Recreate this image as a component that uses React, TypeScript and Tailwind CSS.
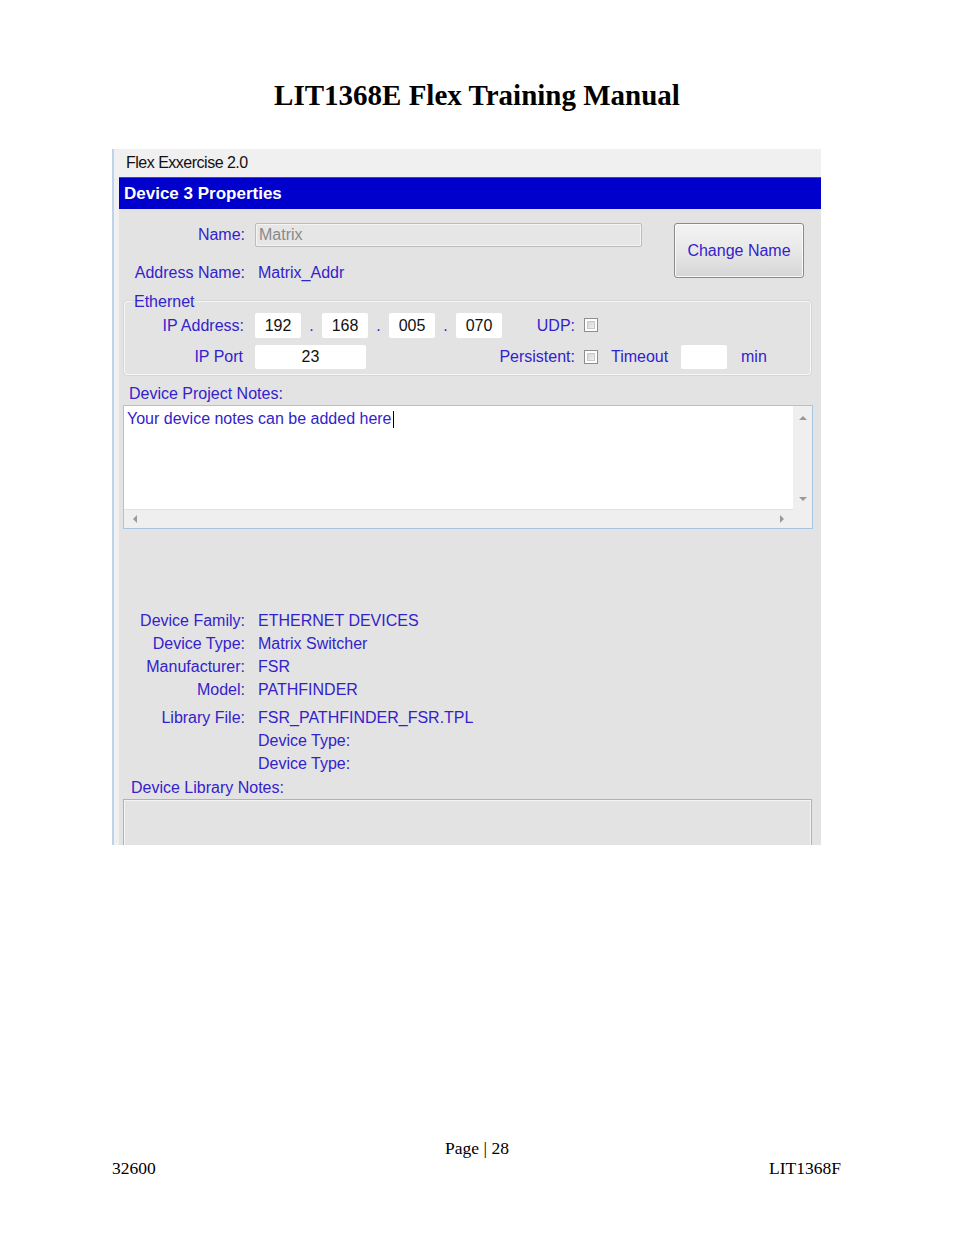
import React from "react";

const LBL = "text-[#3322cc]";

function Checkbox() {
  return (
    <div className="w-[14px] h-[14px] border border-[#8e8e8e] bg-white p-[2px]">
      <div className="w-full h-full bg-gradient-to-br from-[#d4d4d4] to-[#f0f0f0] border border-[#c8c8c8]" />
    </div>
  );
}

function IpBox({ v }: { v: string }) {
  return (
    <div className="w-[46px] h-[25px] bg-white rounded-[2px] flex items-center justify-center text-[#111]">
      {v}
    </div>
  );
}

function Dot() {
  return <div className={`w-[21px] text-center ${LBL}`}>.</div>;
}

function Tri({ dir }: { dir: "up" | "down" | "left" | "right" }) {
  const pts =
    dir === "up"
      ? "0,5 4,1 8,5"
      : dir === "down"
      ? "0,1 8,1 4,5"
      : dir === "left"
      ? "5,0 5,8 1,4"
      : "1,0 1,8 5,4";
  const w = dir === "up" || dir === "down" ? 8 : 6;
  const h = dir === "up" || dir === "down" ? 6 : 8;
  return (
    <svg width={w} height={h} viewBox={`0 0 ${w} ${h}`}>
      <polygon points={pts} fill="#9a9a9a" />
    </svg>
  );
}

function InfoRow({ label, value, h = "h-[23px]", extra = "" }: { label: string; value: string; h?: string; extra?: string }) {
  return (
    <div className={`flex items-center ${h} ${extra}`}>
      <div className={`w-[126px] text-right ${LBL}`}>{label}</div>
      <div className={`ml-[13px] ${LBL}`}>{value}</div>
    </div>
  );
}

export default function App() {
  return (
    <div className="w-[954px] h-[1235px] bg-white flex flex-col overflow-hidden">
      <div className="pt-[78px] h-[112px] text-center text-[29px] leading-[34px] font-bold text-black" style={{ fontFamily: '"Liberation Serif", "DejaVu Serif", serif' }}>
        LIT1368E Flex Training Manual
      </div>

      {/* screenshot */}
      <div
        className="mt-[37px] ml-[112px] w-[709px] h-[696px] border-l-2 border-[#bdd3ea] bg-[#f0f0f0] flex flex-col text-[16px] tracking-[0px]"
        style={{ fontFamily: '"Liberation Sans", Arial, sans-serif' }}
      >
        <div className="h-[28px] flex items-center pl-[12px] text-[#111] tracking-[-0.5px]">Flex Exxercise 2.0</div>
        <div className="ml-[5px] flex flex-col">
          <div className="h-[32px] bg-[#0000cc] border-t border-[#4a4a8a] flex items-center pl-[5px] text-white font-bold text-[17px] tracking-normal">
            Device 3 Properties
          </div>
          <div className="h-[636px] bg-[#e3e3e3] overflow-hidden flex flex-col">
            {/* Name section */}
            <div className="flex pt-[14px]">
              <div className="flex flex-col">
                <div className="flex items-center h-[24px]">
                  <div className={`w-[126px] text-right ${LBL}`}>Name:</div>
                  <div className="ml-[10px] w-[387px] h-[24px] bg-[#e6e6e6] border border-[#bcbcbc] rounded-[2px] shadow-[inset_0_0_0_1px_#f4f4f4] flex items-center pl-[3px] text-[#8a8a8a]">
                    Matrix
                  </div>
                </div>
                <div className="flex items-center h-[24px] mt-[14px]">
                  <div className={`w-[126px] text-right ${LBL}`}>Address Name:</div>
                  <div className={`ml-[13px] ${LBL}`}>Matrix_Addr</div>
                </div>
              </div>
              <div className="ml-[32px] w-[130px] h-[55px] border border-[#8a8a8a] rounded-[3px] bg-gradient-to-b from-[#f3f3f3] via-[#e8e8e8] to-[#d6d6d6] shadow-[inset_0_0_0_1px_#fafafa] flex items-center justify-center text-[#3322cc]">
                Change Name
              </div>
            </div>

            {/* Ethernet */}
            <fieldset className="mt-[8px] ml-[5px] w-[687px] border border-[#f7f7f7] rounded-[3px] shadow-[0_0_0_1px_#d6d6d6] pb-[5px]">
              <legend className={`ml-[8px] px-[1px] leading-[17px] ${LBL}`}>Ethernet</legend>
              <div className="flex items-center h-[25px] mt-[3px]">
                <div className={`w-[119px] text-right ${LBL}`}>IP Address:</div>
                <div className="ml-[11px] flex items-center">
                  <IpBox v="192" />
                  <Dot />
                  <IpBox v="168" />
                  <Dot />
                  <IpBox v="005" />
                  <Dot />
                  <IpBox v="070" />
                </div>
                <div className={`w-[73px] text-right ${LBL}`}>UDP:</div>
                <div className="ml-[9px] -mt-[2px]">
                  <Checkbox />
                </div>
              </div>
              <div className="flex items-center h-[24px] mt-[7px]">
                <div className={`w-[118px] text-right ${LBL}`}>IP Port</div>
                <div className="ml-[12px] w-[111px] h-[24px] bg-white rounded-[2px] flex items-center justify-center text-[#111]">23</div>
                <div className={`w-[209px] text-right ${LBL}`}>Persistent:</div>
                <div className="ml-[9px]">
                  <Checkbox />
                </div>
                <div className={`ml-[13px] w-[70px] ${LBL}`}>Timeout</div>
                <div className="w-[46px] h-[24px] bg-white rounded-[2px]" />
                <div className={`ml-[14px] ${LBL}`}>min</div>
              </div>
            </fieldset>

            {/* Notes */}
            <div className={`mt-[10px] ml-[10px] h-[18px] leading-[18px] ${LBL}`}>Device Project Notes:</div>
            <div className="mt-[2px] ml-[4px] w-[690px] h-[124px] border border-[#a7c5e2] flex flex-col">
              <div className="flex h-[103px]">
                <div className="flex-1 bg-white pl-[3px] pt-[4px]">
                  <div className={`flex items-center h-[18px] ${LBL}`}>
                    Your device notes can be added here
                    <span className="inline-block w-[1px] h-[17px] bg-black ml-[1px]" />
                  </div>
                </div>
                <div className="w-[19px] bg-[#efefef] flex flex-col items-center justify-between pt-[9px] pb-[7px]">
                  <Tri dir="up" />
                  <Tri dir="down" />
                </div>
              </div>
              <div className="flex h-[19px]">
                <div className="flex-1 bg-[#efefef] border-t border-[#e2e2e2] flex items-center justify-between pl-[8px] pr-[8px]">
                  <Tri dir="left" />
                  <Tri dir="right" />
                </div>
                <div className="w-[19px] bg-[#efefef]" />
              </div>
            </div>

            {/* Info */}
            <div className="mt-[80px] flex flex-col">
              <InfoRow label="Device Family:" value="ETHERNET DEVICES" />
              <InfoRow label="Device Type:" value="Matrix Switcher" />
              <InfoRow label="Manufacturer:" value="FSR" />
              <InfoRow label="Model:" value="PATHFINDER" />
              <InfoRow label="Library File:" value="FSR_PATHFINDER_FSR.TPL" extra="mt-[5px]" />
              <InfoRow label="" value="Device Type:" />
              <InfoRow label="" value="Device Type:" />
            </div>
            <div className={`mt-[4px] ml-[12px] h-[18px] leading-[18px] ${LBL}`}>Device Library Notes:</div>
            <div className="mt-[2px] ml-[4px] w-[689px] h-[60px] border-t border-l border-r border-[#b2b2b2]">
              <div className="w-full h-full border-t border-l border-r border-[#f4f4f4] bg-[#e3e3e3]" />
            </div>
          </div>
        </div>
      </div>

      {/* footer */}
      <div className="mt-[293px] flex flex-col text-[17.5px] text-black" style={{ fontFamily: '"Liberation Serif", "DejaVu Serif", serif' }}>
        <div className="h-[20px] leading-[20px] text-center">Page | 28</div>
        <div className="h-[20px] leading-[20px] flex justify-between pl-[112px] pr-[113px]">
          <span>32600</span>
          <span>LIT1368F</span>
        </div>
      </div>
    </div>
  );
}
